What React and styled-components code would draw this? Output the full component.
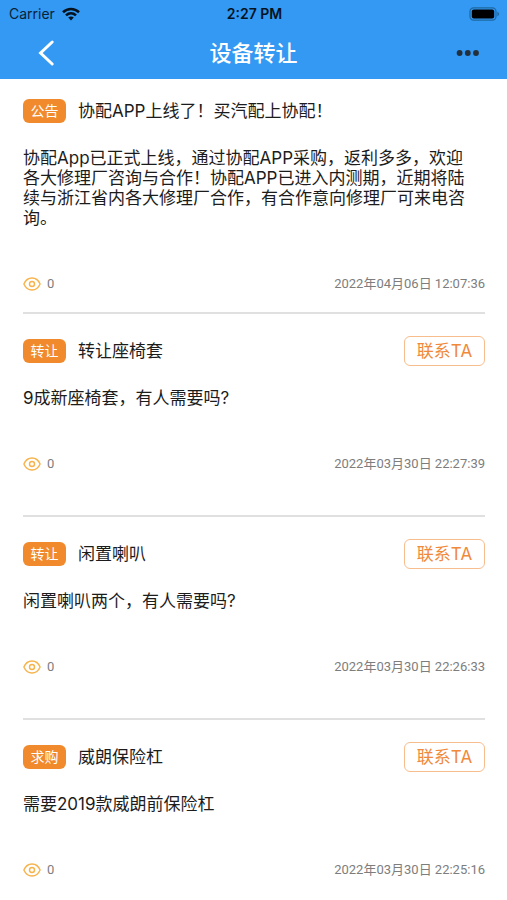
import React from 'react';
import styled, { createGlobalStyle } from 'styled-components';

const GlobalStyle = createGlobalStyle`
  * {
    box-sizing: border-box;
  }

  body {
    margin: 0;
    background-color: #ffffff;
    color: #1c1c1c;
    font-family: Inter, 'Noto Sans CJK SC', sans-serif;
  }

  button {
    font-family: inherit;
    cursor: pointer;
  }
`;

const Header = styled.header`
  background-color: #3399f3;
`;

const StatusBar = styled.div`
  display: grid;
  grid-template-columns: 1fr auto 1fr;
  align-items: center;
  height: 26px;
  padding: 2px 7px 0 9px;
  color: #0b2136;
  font-size: 14px;
  line-height: 20px;
`;

const Carrier = styled.div`
  display: flex;
  align-items: center;
  gap: 7px;
`;

const Clock = styled.time`
  color: #06131f;
  font-weight: 600;
`;

const Battery = styled.svg`
  justify-self: end;
`;

const NavBar = styled.nav`
  display: grid;
  grid-template-columns: 1fr auto 1fr;
  align-items: center;
  height: 53px;
  padding: 0 28px;
`;

const NavTitle = styled.h1`
  margin: 0;
  color: #ffffff;
  font-size: 22px;
  font-weight: 500;
  line-height: 32px;
`;

const IconButton = styled.button`
  display: flex;
  justify-self: ${(props) => props.$side};
  padding: 0;
  background: none;
  border: none;
`;

const List = styled.main`
  padding: 0 22px 0 23px;
`;

const Item = styled.article`
  padding: ${(props) => (props.$notice ? '17px 0 20px' : '22px 0 43px')};
  border-bottom: 2px solid #e0e0e0;

  &:last-child {
    border-bottom: none;
  }
`;

const ItemHead = styled.div`
  display: flex;
  align-items: center;
  gap: 12px;
  height: 30px;
`;

const Tag = styled.span`
  width: 43px;
  height: 24px;
  background-color: #f18a2c;
  color: #ffffff;
  border-radius: 6px;
  font-size: 14px;
  line-height: 24px;
  text-align: center;
`;

const ItemTitle = styled.h2`
  flex: 1;
  margin: 0;
  font-size: 17px;
  font-weight: 400;
  line-height: 24px;
`;

const ContactButton = styled.button`
  width: 81px;
  height: 30px;
  padding: 0;
  background-color: #ffffff;
  color: #f0893a;
  border: 1px solid #f8bd8c;
  border-radius: 6px;
  font-size: 17px;
  line-height: 26px;
`;

const Content = styled.p`
  margin: 22px 0 48px;
  padding-right: 12px;
  font-size: 17px;
  line-height: 20px;
`;

const Meta = styled.div`
  display: flex;
  align-items: center;
  justify-content: space-between;
  height: 16px;
  color: #7d7d7d;
  font-family: Roboto, 'Noto Sans CJK SC', sans-serif;
  font-size: 13px;
  line-height: 16px;
`;

const Views = styled.span`
  display: flex;
  align-items: center;
  gap: 6px;
`;

const posts = [
  {
    id: 1,
    tag: '公告',
    title: '协配APP上线了！买汽配上协配！',
    text: '协配App已正式上线，通过协配APP采购，返利多多，欢迎各大修理厂咨询与合作！协配APP已进入内测期，近期将陆续与浙江省内各大修理厂合作，有合作意向修理厂可来电咨询。',
    views: 0,
    date: '2022年04月06日 12:07:36',
    notice: true,
  },
  {
    id: 2,
    tag: '转让',
    title: '转让座椅套',
    text: '9成新座椅套，有人需要吗?',
    views: 0,
    date: '2022年03月30日 22:27:39',
  },
  {
    id: 3,
    tag: '转让',
    title: '闲置喇叭',
    text: '闲置喇叭两个，有人需要吗?',
    views: 0,
    date: '2022年03月30日 22:26:33',
  },
  {
    id: 4,
    tag: '求购',
    title: '威朗保险杠',
    text: '需要2019款威朗前保险杠',
    views: 0,
    date: '2022年03月30日 22:25:16',
  },
];

function WifiIcon() {
  return (
    <svg width="18" height="14" viewBox="0 0 18 14" fill="none" stroke="#06131f" strokeWidth="2.6">
      <path d="M1 5.2C5.6 0.9 12.4 0.9 17 5.2" />
      <path d="M4 8.4C6.9 5.7 11.1 5.7 14 8.4" />
      <path d="M9 13.4L6.2 10.6C7.8 9.2 10.2 9.2 11.8 10.6Z" fill="#06131f" stroke="none" />
    </svg>
  );
}

function BatteryIcon() {
  return (
    <Battery width="31" height="14" viewBox="0 0 31 14">
      <rect x="1" y="0.8" width="26" height="12.4" rx="3.6" fill="none" stroke="#1f689f" strokeWidth="1.2" />
      <rect x="2.8" y="2.5" width="22.4" height="9" rx="2" fill="#000000" />
      <path d="M28.4 4.8C30.6 5.6 30.6 8.4 28.4 9.2Z" fill="#1f689f" />
    </Battery>
  );
}

function EyeIcon() {
  return (
    <svg width="18" height="14" viewBox="0 0 18 14" fill="none" stroke="#f7b34c" strokeWidth="1.4">
      <path d="M0.9 7C2.6 3 5.5 1 9 1C12.5 1 15.4 3 17.1 7C15.4 11 12.5 13 9 13C5.5 13 2.6 11 0.9 7Z" />
      <circle cx="9" cy="7" r="2.5" />
    </svg>
  );
}

function Post({ post }) {
  return (
    <Item $notice={post.notice}>
      <ItemHead>
        <Tag>{post.tag}</Tag>
        <ItemTitle>{post.title}</ItemTitle>
        {post.notice ? null : <ContactButton type="button">联系TA</ContactButton>}
      </ItemHead>
      <Content>{post.text}</Content>
      <Meta>
        <Views>
          <EyeIcon />
          {post.views}
        </Views>
        <time>{post.date}</time>
      </Meta>
    </Item>
  );
}

function App() {
  return (
    <>
      <GlobalStyle />
      <Header>
        <StatusBar>
          <Carrier>
            Carrier
            <WifiIcon />
          </Carrier>
          <Clock>2:27 PM</Clock>
          <BatteryIcon />
        </StatusBar>
        <NavBar>
          <IconButton type="button" $side="start">
            <svg width="30" height="28" viewBox="0 0 30 28" fill="none" stroke="#ffffff" strokeWidth="3" strokeLinecap="round">
              <path d="M24.2 3L12.6 14L24.2 25" />
            </svg>
          </IconButton>
          <NavTitle>设备转让</NavTitle>
          <IconButton type="button" $side="end">
            <svg width="24" height="8" viewBox="0 0 24 8" fill="#23303c">
              <circle cx="4.6" cy="4" r="2.9" />
              <circle cx="12.8" cy="4" r="2.9" />
              <circle cx="21" cy="4" r="2.9" />
            </svg>
          </IconButton>
        </NavBar>
      </Header>
      <List>
        {posts.map((post) => (
          <Post key={post.id} post={post} />
        ))}
      </List>
    </>
  );
}

export default App;
